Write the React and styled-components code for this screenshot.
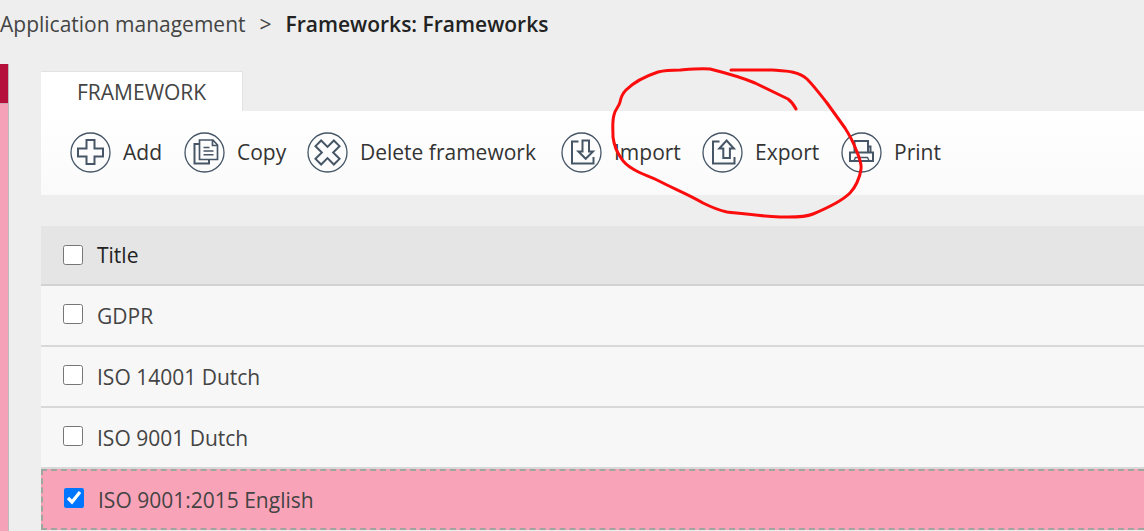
import React, { useState } from "react";
import styled, { createGlobalStyle } from "styled-components";

const GlobalStyle = createGlobalStyle`
  * { box-sizing: border-box; }
  body {
    margin: 0;
    background: #eeeeee;
    color: #444444;
    font-family: "Open Sans", "Noto Sans", sans-serif;
    font-size: 21px;
    font-weight: 400;
    line-height: 28px;
    overflow: hidden;
  }
`;

const Page = styled.div`
  position: relative;
  display: flex;
  flex-direction: column;
  min-height: 100vh;
`;

const Breadcrumb = styled.nav`
  display: flex;
  gap: 14px;
  padding: 10px 0 26px;
  white-space: nowrap;
`;

const CrumbLink = styled.a`
  color: inherit;
  text-decoration: none;
`;

const CurrentCrumb = styled.span`
  color: #222222;
  font-weight: 600;
`;

const Body = styled.div`
  display: flex;
  flex: 1;
`;

const Sidebar = styled.aside`
  display: flex;
  flex-direction: column;
  flex: 0 0 9px;
  border: solid #bbbbbb;
  border-width: 0 1px 0 0;
  background: #f5a2b8;
`;

const SidebarHead = styled.div`
  height: 40px;
  background: #b5103c;
  border-bottom: 1px solid #c9a5ae;
`;

const Main = styled.main`
  flex: 1;
  min-width: 0;
  padding: 7px 0 0 32px;
`;

const Tab = styled.button`
  display: block;
  height: 40px;
  padding: 0 36px;
  border: solid #e2e2e2;
  border-width: 1px 1px 0 0;
  background: #ffffff;
  color: #444444;
  font: inherit;
`;

const Toolbar = styled.div`
  display: grid;
  grid-template-columns: 114px 123px 254px 141px 139px auto;
  align-items: center;
  height: 84px;
  padding: 0 0 2px 29px;
  background: linear-gradient(#ffffff, #fafafa);
`;

const ToolButton = styled.button`
  display: flex;
  align-items: center;
  gap: 12px;
  padding: 0;
  border: 0;
  background: none;
  color: #333333;
  font: inherit;
  white-space: nowrap;
`;

const ToolIcon = styled.svg`
  flex: none;
  width: 41px;
  height: 41px;
  fill: none;
  stroke: #465666;
  stroke-width: 2;
`;

const Table = styled.table`
  width: 100%;
  margin-top: 31px;
  border-collapse: separate;
  border-spacing: 0;
`;

const HeadRow = styled.tr`
  background: #e5e5e5;
`;

const Row = styled.tr`
  background: ${(p) => (p.$selected ? "#f9a3b8" : "#f7f7f7")};
  & > td {
    border: solid #d8d8d8;
    border-width: 0 0 2px;
    ${(p) =>
      p.$selected &&
      "border: 2px dashed #a0a5a0; border-right-width: 0; padding-left: 21px;"}
  }
`;

const HeadCell = styled.th`
  height: 60px;
  padding: 0 0 0 22px;
  border-bottom: 2px solid #d2d2d2;
  text-align: left;
  color: #222222;
  font-weight: 400;
`;

const Cell = styled.td`
  height: 61px;
  padding: 0 0 0 22px;
`;

const CheckLabel = styled.label`
  display: flex;
  align-items: center;
  gap: 14px;
`;

const Checkbox = styled.input`
  width: 20px;
  height: 20px;
  margin: ${(p) => (p.$raised ? "0 0 4px" : "0")};
`;

const Annotation = styled.svg`
  position: absolute;
  top: 60px;
  left: 600px;
  width: 270px;
  height: 165px;
  fill: none;
  stroke: #fb0d0d;
  stroke-width: 3;
  stroke-linecap: round;
  stroke-linejoin: round;
  pointer-events: none;
`;

const tools = [
  {
    label: "Add",
    icon: <path d="M16.5 8h8v8.5H33v8h-8.5V32h-8v-7.500H8v-8h8.500z" />,
  },
  {
    label: "Copy",
    icon: (
      <>
        <path d="M15 12h-4.500v19.500H25V28" />
        <path d="M15.500 8H29l4.500 5v14.500h-18zM28.500 8v5.500h5" strokeWidth="1.700" />
        <path d="M19.500 15.500h6M19.500 19h10M19.500 22.800h10" strokeWidth="1.400" />
      </>
    ),
  },
  {
    label: "Delete framework",
    icon: (
      <path
        d="M16.500 7.500h8v9h9v8h-9v9h-8v-9h-9v-8h9z"
        transform="rotate(45 20.500 20.500)"
      />
    ),
  },
  {
    label: "Import",
    icon: (
      <>
        <path d="M17.500 9.500H11v22h21.500V25" />
        <path d="M21.500 8.500h6.500v11h4l-7.300 7.300-7.300-7.300h4.100z" />
      </>
    ),
  },
  {
    label: "Export",
    icon: (
      <>
        <path d="M17.500 9.500H11v22h21.500V25" />
        <path d="M21.300 26v-9.500h-4L24.600 8.500l7.300 8h-4V26z" />
      </>
    ),
  },
  {
    label: "Print",
    icon: (
      <>
        <path d="M13.500 20V9H27v11M27 14.500h2.500V20M9 20.500h23V29H9z" />
        <path d="M13 28.500l1.500-3h12l1.500 3" strokeWidth="1.400" />
      </>
    ),
  },
];

const frameworks = [
  "GDPR",
  "ISO 14001 Dutch",
  "ISO 9001 Dutch",
  "ISO 9001:2015 English",
];

export default function App() {
  const [selected, setSelected] = useState(["ISO 9001:2015 English"]);
  const toggle = (name) =>
    setSelected((list) =>
      list.includes(name) ? list.filter((n) => n !== name) : [...list, name]
    );
  const all = selected.length === frameworks.length;

  return (
    <>
      <GlobalStyle />
      <Page>
        <Breadcrumb aria-label="Breadcrumb">
          <CrumbLink href="#">Application management</CrumbLink>
          <span>&gt;</span>
          <CurrentCrumb>Frameworks: Frameworks</CurrentCrumb>
        </Breadcrumb>
        <Body>
          <Sidebar>
            <SidebarHead />
          </Sidebar>
          <Main>
            <Tab type="button">FRAMEWORK</Tab>
            <Toolbar>
              {tools.map((tool) => (
                <ToolButton type="button" key={tool.label}>
                  <ToolIcon viewBox="0 0 41 41" aria-hidden="true">
                    <circle cx="20.500" cy="20.500" r="19.500" strokeWidth="1.300" />
                    {tool.icon}
                  </ToolIcon>
                  {tool.label}
                </ToolButton>
              ))}
            </Toolbar>
            <Table>
              <thead>
                <HeadRow>
                  <HeadCell>
                    <CheckLabel>
                      <Checkbox
                        type="checkbox"
                        checked={all}
                        onChange={() => setSelected(all ? [] : frameworks)}
                      />
                      Title
                    </CheckLabel>
                  </HeadCell>
                </HeadRow>
              </thead>
              <tbody>
                {frameworks.map((name) => (
                  <Row key={name} $selected={selected.includes(name)}>
                    <Cell>
                      <CheckLabel>
                        <Checkbox
                          type="checkbox"
                          $raised
                          checked={selected.includes(name)}
                          onChange={() => toggle(name)}
                        />
                        {name}
                      </CheckLabel>
                    </Cell>
                  </Row>
                ))}
              </tbody>
            </Table>
          </Main>
        </Body>
        <Annotation viewBox="600 60 270 165" aria-hidden="true">
          <path d="M731 70H772C786 71 798 71 807 79C812 84 820 94 827 103L845 128C850 136 853 142 855 147C858 155 862 162 861 169C860 178 855 188 850 193C842 201 825 209 813 214C803 218 790 217 780 217C760 216 745 214 727 212C718 210 711 207 703 203C688 194 672 188 657 180C649 176 641 174 633 169C628 166 624 163 621 158C616 151 614 145 613 137C613 129 612 122 614 115C615 109 619 107 620 102C621 97 623 93 626 90C634 82 646 76 658 72C666 70 673 70 680 70C692 69 702 68 710 69C726 73 741 77 755 83L788 99C792 102 795 107 796 109" />
        </Annotation>
      </Page>
    </>
  );
}
